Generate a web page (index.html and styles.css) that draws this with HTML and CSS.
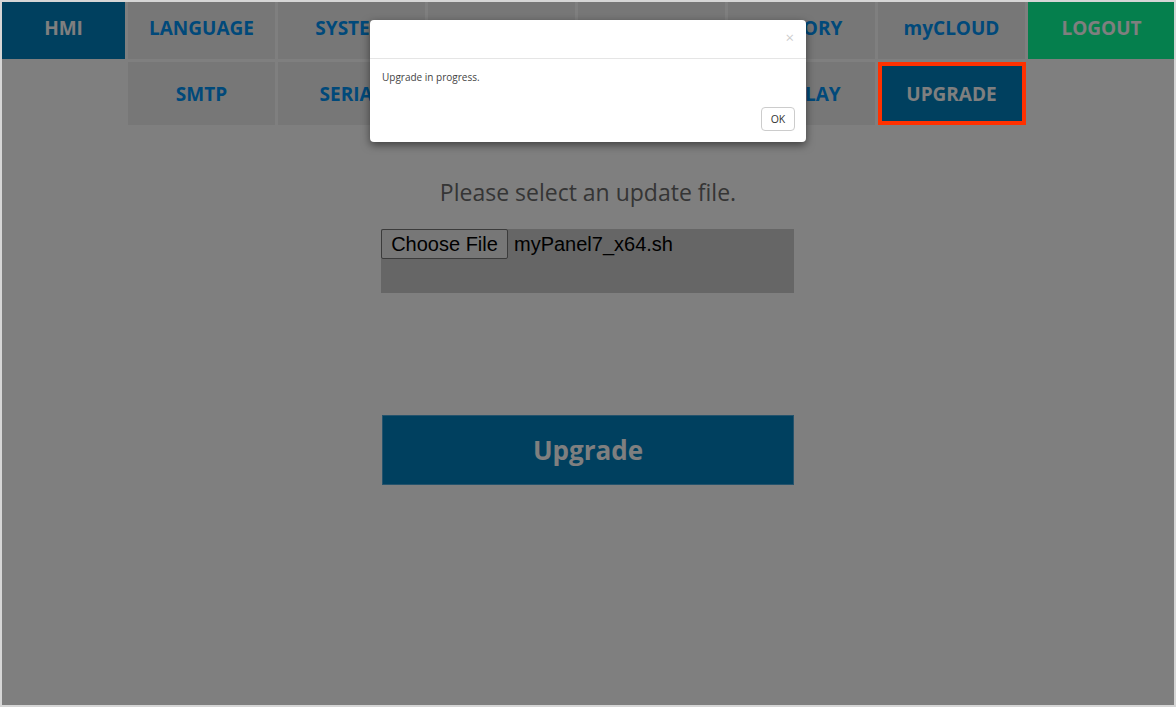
FILE: index.html
```html
<!DOCTYPE html>
<html lang="en">
<head>
  <meta charset="UTF-8" />
  <meta name="viewport" content="width=device-width, initial-scale=1.0"/>
  <title>HMI - Upgrade</title>
  <link rel="stylesheet" href="styles.css">
</head>
<body>

<div class="screen">
  <!-- Main menu -->
  <nav class="menu">
    <a class="tile home" href="#">HMI</a>
    <a class="tile" href="#">LANGUAGE</a>
    <a class="tile" href="#">SYSTEM</a>
    <a class="tile" href="#">NETWORK</a>
    <a class="tile" href="#">DATE/TIME</a>
    <a class="tile" href="#">HISTORY</a>
    <a class="tile" href="#">myCLOUD</a>
    <a class="tile logout" href="#">LOGOUT</a>

    <a class="tile sub-first" href="#">SMTP</a>
    <a class="tile" href="#">SERIAL</a>
    <a class="tile" href="#">MODBUS</a>
    <a class="tile" href="#">VNC</a>
    <a class="tile" href="#">DISPLAY</a>
    <a class="tile active" href="#">UPGRADE</a>
  </nav>

  <!-- Upgrade form -->
  <main class="upgrade">
    <p class="hint">Please select an update file.</p>
    <div class="file-box">
      <span class="file-btn">Choose File</span>
      <span class="file-name">myPanel7_x64.sh</span>
    </div>
    <button class="btn-upgrade">Upgrade</button>
  </main>

  <div class="backdrop"></div>
  <div class="mark"></div>

  <!-- Message dialog -->
  <div class="dialog">
    <div class="dialog-head"><span class="close">&times;</span></div>
    <div class="dialog-body">Upgrade in progress.</div>
    <div class="dialog-foot"><button class="btn-ok">OK</button></div>
  </div>
</div>

</body>
</html>
```

FILE: styles.css
```css
body {
  margin: 0;
  padding: 2px;
  background: #d6d6d6;
  font-family: 'Open Sans', sans-serif;
}

.screen {
  position: relative;
  width: 1172px;
  height: 703px;
  background: #fff;
  overflow: hidden;
}

/* menu tiles */
.menu {
  display: grid;
  grid-template-columns: 123px repeat(7, 147px);
  grid-template-rows: 57px 63px;
  gap: 3px;
}

.tile {
  display: flex;
  align-items: center;
  justify-content: center;
  background: #eeeeee;
  color: #0092f4;
  font-size: 19px;
  font-weight: 700;
  text-decoration: none;
}

.menu .tile:nth-child(-n+8) {
  padding-bottom: 5px;
}

.home,
.active {
  background: #0080be;
  color: #fff;
}

.logout {
  background: #0aff9a;
  color: #fff;
}

.sub-first {
  grid-column: 2;
}

/* upgrade form */
.upgrade {
  display: flex;
  flex-direction: column;
  align-items: center;
  padding-top: 52px;
}

.hint {
  margin: 0 0 22px;
  font-size: 23px;
  line-height: 30px;
  color: #6a6a6a;
}

.file-box {
  display: flex;
  align-items: flex-start;
  width: 413px;
  height: 64px;
  margin-left: -1px;
  background: #cccccc;
  font-family: 'Liberation Sans', Arial, sans-serif;
  font-size: 20px;
}

.file-btn {
  box-sizing: border-box;
  width: 127px;
  height: 30px;
  line-height: 28px;
  text-align: center;
  background: #efefef;
  border: 1px solid #767676;
  border-radius: 2px;
  color: #000;
}

.file-name {
  margin-left: 6px;
  line-height: 30px;
  color: #000;
}

.btn-upgrade {
  margin-top: 122px;
  width: 412px;
  height: 70px;
  background: #0080be;
  border: 1px solid #4aa6d8;
  color: #fff;
  font-family: 'Open Sans', sans-serif;
  font-size: 26px;
  font-weight: 700;
  cursor: pointer;
}

/* modal */
.backdrop {
  position: absolute;
  inset: 0;
  background: rgba(0, 0, 0, 0.5);
}

.mark {
  position: absolute;
  left: 876px;
  top: 60px;
  width: 148px;
  height: 63px;
  box-sizing: border-box;
  border: 4px solid #ff3100;
}

.dialog {
  position: absolute;
  left: 368px;
  top: 18px;
  width: 436px;
  background: #fff;
  border-radius: 4px;
  box-shadow: 0 3px 9px rgba(0, 0, 0, 0.5);
  color: #444;
  font-size: 10px;
}

.dialog-head {
  height: 38px;
  border-bottom: 1px solid #e5e5e5;
  display: flex;
  justify-content: flex-end;
  align-items: center;
  padding: 0 12px;
}

.close {
  font-size: 15px;
  color: #000;
  opacity: 0.2;
  margin-bottom: 4px;
}

.dialog-body {
  padding: 10px 12px;
  line-height: 16px;
}

.dialog-foot {
  display: flex;
  justify-content: flex-end;
  padding: 12px 11px 11px;
}

.btn-ok {
  width: 34px;
  height: 24px;
  padding: 0;
  background: #fff;
  border: 1px solid #ccc;
  border-radius: 4px;
  font-family: 'Open Sans', sans-serif;
  font-size: 10.5px;
  color: #333;
}
```
